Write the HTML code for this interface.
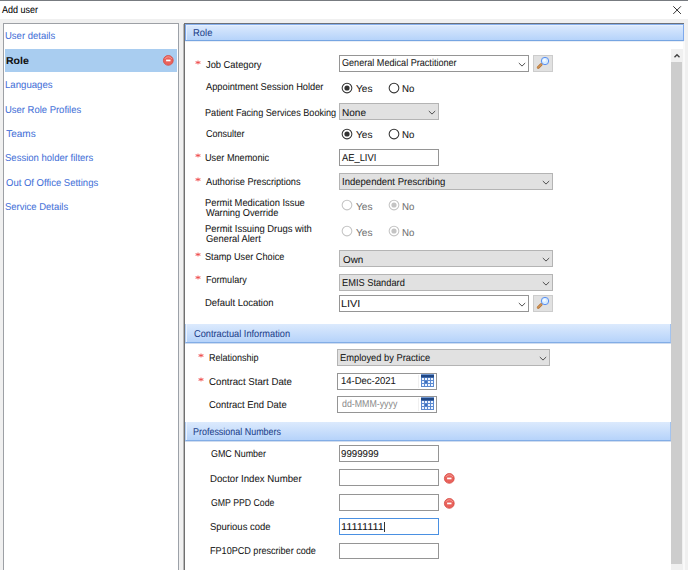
<!DOCTYPE html><html><head><meta charset="utf-8"><style>
*{margin:0;padding:0;box-sizing:border-box}
html,body{width:688px;height:570px;overflow:hidden;background:#f0f0f0;position:relative;font-family:"Liberation Sans",sans-serif}
.a{position:absolute}
.t{position:absolute;font-size:10px;line-height:12px;white-space:nowrap;transform-origin:0 0;color:#1a1a1a;text-rendering:geometricPrecision;-webkit-text-stroke:0.05px currentColor}
.hdr{position:absolute;left:185px;background:linear-gradient(#dceafd,#b6d3fa);border-bottom:1px solid #72a0e2;box-shadow:inset 1px 0 0 #ecf3fd}
.h1{border-left:1px solid #7ea9ec;border-top:1px solid #86afec;border-right:1px solid #7ea9ec;border-bottom-color:#76a5e2;box-shadow:inset 1px 1px 0 #e6f0fd,0 1px 0 #e9eef6}
.h2{border-left:1px solid #b3cff3;border-right:1px solid #a3c3ef;border-bottom-color:#82ade6;box-shadow:inset 1px 0 0 #ecf3fd,0 1px 0 #cfdcef}
.bx{position:absolute;border:1px solid #959595;background:#fff}
.cb{border-color:#b4b4b4;background:#e1e1e1}
.sbtn{position:absolute;width:20px;height:17px;border:1px solid #cccccc;background:#e1e1e1}
.rad{position:absolute;width:11px;height:11px;border-radius:50%;border:1px solid #3a3a3a;background:#fff}
.rad.on::after{content:"";position:absolute;left:2px;top:2px;width:5px;height:5px;border-radius:50%;background:#333}
.rad.dis{border-color:#c2c2c2}
.rad.dis.on::after{background:#c2c2c2}
</style></head><body>
<div class="a" style="left:0;top:0;width:688px;height:1px;background:#777b80"></div>
<div class="a" style="left:0;top:1px;width:688px;height:18px;background:#fff"></div>
<div class="t" style="left:1.70px;top:5px;transform:scaleX(0.9000);color:#000;">Add user</div>
<svg class="a" style="left:672px;top:5px" width="10" height="10" viewBox="0 0 10 10"><path d="M1.3 1.3L8.9 8.9M8.9 1.3L1.3 8.9" stroke="#262626" stroke-width="0.95"/></svg>
<div class="a" style="left:3px;top:23px;width:176px;height:547px;background:#fff;border-left:1px solid #9da0a5;border-top:1px solid #9da0a5;border-right:1px solid #9ca1a8"></div>
<div class="a" style="left:5px;top:49px;width:172px;height:23px;background:#a9cdf0"></div>
<div class="t" style="left:5.25px;top:31px;transform:scaleX(0.9500);color:#4470d8;">User details</div>
<div class="t" style="left:5.24px;top:80px;transform:scaleX(0.9625);color:#4470d8;">Languages</div>
<div class="t" style="left:5.25px;top:105px;transform:scaleX(0.9456);color:#4470d8;">User Role Profiles</div>
<div class="t" style="left:6.20px;top:129px;transform:scaleX(1.0000);color:#4470d8;">Teams</div>
<div class="t" style="left:5.25px;top:153px;transform:scaleX(0.9511);color:#4470d8;">Session holder filters</div>
<div class="t" style="left:6.20px;top:178px;transform:scaleX(0.9495);color:#4470d8;">Out Of Office Settings</div>
<div class="t" style="left:5.25px;top:202px;transform:scaleX(0.9470);color:#4470d8;">Service Details</div>
<div class="t" style="left:5.74px;top:56px;transform:scaleX(1.0550);color:#111;font-weight:bold;">Role</div>
<svg class="a" style="left:162.20px;top:54.40px" width="12" height="12" viewBox="0 0 12 12"><circle cx="6.3" cy="6.4" r="4.9" fill="#e9625b" stroke="#d54a43" stroke-width="0.8"/><path d="M2.8 5A3.8 3.6 0 0 1 9.8 5" fill="none" stroke="#f6a39d" stroke-width="0.8"/><rect x="4.1" y="5.6" width="4.4" height="1.7" fill="#fff"/></svg>
<div class="a" style="left:183px;top:24px;width:1px;height:546px;background:#b8b8b8"></div>
<div class="a" style="left:184px;top:23px;width:500px;height:547px;background:#fff;border-left:1px solid #707070;border-top:1px solid #6c7078"></div>
<div class="a" style="left:683px;top:41px;width:2px;height:529px;background:#f9f9f9"></div>
<div class="a" style="left:671px;top:49px;width:12px;height:521px;background:#f0f0f0"></div>
<svg class="a" style="left:671px;top:49px" width="12" height="13" viewBox="0 0 12 13"><path d="M3.5 8.3L6 5.7L8.5 8.3" fill="none" stroke="#404040" stroke-width="1.35"/></svg>
<div class="a" style="left:671px;top:62px;width:11px;height:502px;background:#cdcdcd"></div>
<div class="hdr h1" style="top:24px;width:499px;height:17px"></div>
<div class="t" style="left:192.86px;top:28px;transform:scaleX(0.9421);color:#21408a;">Role</div>
<div class="hdr h2" style="top:324px;width:486px;height:19px"></div>
<div class="t" style="left:193.70px;top:329px;transform:scaleX(0.9240);color:#21408a;">Contractual Information</div>
<div class="hdr h2" style="top:422px;width:486px;height:19px"></div>
<div class="t" style="left:192.81px;top:427px;transform:scaleX(0.8948);color:#21408a;">Professional Numbers</div>
<div class="t" style="left:206.40px;top:60px;transform:scaleX(0.9322);color:#141414;">Job Category</div>
<svg class="a" style="left:195px;top:60px" width="6" height="6" viewBox="0 0 6 6"><path d="M3 0.6V4.4M0.6 1.7L5.4 3.3M5.4 1.7L0.6 3.3" stroke="#ee4c4c" stroke-width="0.95"/></svg>
<div class="t" style="left:206.40px;top:82px;transform:scaleX(0.9268);color:#141414;">Appointment Session Holder</div>
<div class="t" style="left:205.49px;top:108px;transform:scaleX(0.9112);color:#141414;">Patient Facing Services Booking</div>
<div class="t" style="left:206.40px;top:129px;transform:scaleX(0.9023);color:#141414;">Consulter</div>
<div class="t" style="left:205.48px;top:153px;transform:scaleX(0.9159);color:#141414;">User Mnemonic</div>
<svg class="a" style="left:195px;top:153px" width="6" height="6" viewBox="0 0 6 6"><path d="M3 0.6V4.4M0.6 1.7L5.4 3.3M5.4 1.7L0.6 3.3" stroke="#ee4c4c" stroke-width="0.95"/></svg>
<div class="t" style="left:206.40px;top:177px;transform:scaleX(0.9194);color:#141414;">Authorise Prescriptions</div>
<svg class="a" style="left:195px;top:177px" width="6" height="6" viewBox="0 0 6 6"><path d="M3 0.6V4.4M0.6 1.7L5.4 3.3M5.4 1.7L0.6 3.3" stroke="#ee4c4c" stroke-width="0.95"/></svg>
<div class="t" style="left:205.46px;top:198px;transform:scaleX(0.9352);color:#141414;">Permit Medication Issue</div>
<div class="t" style="left:206.40px;top:208px;transform:scaleX(0.9269);color:#141414;">Warning Override</div>
<div class="t" style="left:205.46px;top:224px;transform:scaleX(0.9420);color:#141414;">Permit Issuing Drugs with</div>
<div class="t" style="left:206.40px;top:234px;transform:scaleX(0.9379);color:#141414;">General Alert</div>
<div class="t" style="left:205.48px;top:252px;transform:scaleX(0.9153);color:#141414;">Stamp User Choice</div>
<svg class="a" style="left:195px;top:252px" width="6" height="6" viewBox="0 0 6 6"><path d="M3 0.6V4.4M0.6 1.7L5.4 3.3M5.4 1.7L0.6 3.3" stroke="#ee4c4c" stroke-width="0.95"/></svg>
<div class="t" style="left:205.50px;top:275px;transform:scaleX(0.9045);color:#141414;">Formulary</div>
<svg class="a" style="left:195px;top:275px" width="6" height="6" viewBox="0 0 6 6"><path d="M3 0.6V4.4M0.6 1.7L5.4 3.3M5.4 1.7L0.6 3.3" stroke="#ee4c4c" stroke-width="0.95"/></svg>
<div class="t" style="left:205.45px;top:298px;transform:scaleX(0.9479);color:#141414;">Default Location</div>
<div class="bx " style="left:339px;top:55px;width:190px;height:17px;"></div>
<svg class="a" style="left:518px;top:61px" width="8" height="7" viewBox="0 0 8 7"><path d="M0.8 2.0L4 5.1L7.2 2.0" fill="none" stroke="#4e4e4e" stroke-width="1"/></svg>
<div class="t" style="left:342.00px;top:58px;transform:scaleX(0.9087);color:#141414;">General Medical Practitioner</div>
<div class="sbtn" style="left:533px;top:55px"></div>
<svg class="a" style="left:533px;top:55px" width="20" height="17" viewBox="0 0 20 17"><path d="M5.2 12.4L8.2 9.4" stroke="#b8783a" stroke-width="2.8" stroke-linecap="round"/><path d="M5.2 12.4L8.2 9.4" stroke="#e2ac70" stroke-width="1" stroke-linecap="round"/><circle cx="12" cy="6" r="3.7" fill="#d6ebff" stroke="#5a8ff0" stroke-width="1"/><circle cx="11.4" cy="5.3" r="1.5" fill="#f6fbff"/></svg>
<svg class="a" style="left:339.60px;top:80.90px" width="14" height="14" viewBox="0 0 14 14"><circle cx="7" cy="7" r="4.85" fill="#fff" stroke="#333333" stroke-width="1.05"/><circle cx="7" cy="7" r="2.6" fill="#333333"/></svg>
<div class="t" style="left:355.89px;top:84px;transform:scaleX(1.0133);color:#141414;">Yes</div>
<svg class="a" style="left:387.00px;top:80.90px" width="14" height="14" viewBox="0 0 14 14"><circle cx="7" cy="7" r="4.85" fill="#fff" stroke="#333333" stroke-width="1.05"/></svg>
<div class="t" style="left:402.43px;top:84px;transform:scaleX(0.9667);color:#141414;">No</div>
<div class="bx cb" style="left:339px;top:103px;width:100px;height:17px;"></div>
<svg class="a" style="left:428px;top:109px" width="8" height="7" viewBox="0 0 8 7"><path d="M0.8 2.0L4 5.1L7.2 2.0" fill="none" stroke="#4e4e4e" stroke-width="1"/></svg>
<div class="t" style="left:341.50px;top:108px;transform:scaleX(1.0045);color:#141414;">None</div>
<svg class="a" style="left:339.60px;top:126.50px" width="14" height="14" viewBox="0 0 14 14"><circle cx="7" cy="7" r="4.85" fill="#fff" stroke="#333333" stroke-width="1.05"/><circle cx="7" cy="7" r="2.6" fill="#333333"/></svg>
<div class="t" style="left:355.89px;top:130px;transform:scaleX(1.0133);color:#141414;">Yes</div>
<svg class="a" style="left:387.00px;top:126.50px" width="14" height="14" viewBox="0 0 14 14"><circle cx="7" cy="7" r="4.85" fill="#fff" stroke="#333333" stroke-width="1.05"/></svg>
<div class="t" style="left:402.43px;top:130px;transform:scaleX(0.9667);color:#141414;">No</div>
<div class="bx " style="left:339px;top:149px;width:100px;height:17px;"></div>
<div class="t" style="left:342.10px;top:153px;transform:scaleX(0.9333);color:#141414;">AE_LIVI</div>
<div class="bx cb" style="left:339px;top:173px;width:214px;height:17px;"></div>
<svg class="a" style="left:542px;top:179px" width="8" height="7" viewBox="0 0 8 7"><path d="M0.8 2.0L4 5.1L7.2 2.0" fill="none" stroke="#4e4e4e" stroke-width="1"/></svg>
<div class="t" style="left:341.65px;top:177px;transform:scaleX(0.9533);color:#141414;">Independent Prescribing</div>
<svg class="a" style="left:339.60px;top:198.00px" width="14" height="14" viewBox="0 0 14 14"><circle cx="7" cy="7" r="4.85" fill="#fff" stroke="#c4c4c4" stroke-width="1.05"/></svg>
<div class="t" style="left:355.89px;top:202px;transform:scaleX(1.0133);color:#707070;">Yes</div>
<svg class="a" style="left:387.00px;top:198.00px" width="14" height="14" viewBox="0 0 14 14"><circle cx="7" cy="7" r="4.85" fill="#fff" stroke="#c4c4c4" stroke-width="1.05"/><circle cx="7" cy="7" r="2.6" fill="#c4c4c4"/></svg>
<div class="t" style="left:402.43px;top:202px;transform:scaleX(0.9667);color:#707070;">No</div>
<svg class="a" style="left:339.60px;top:223.90px" width="14" height="14" viewBox="0 0 14 14"><circle cx="7" cy="7" r="4.85" fill="#fff" stroke="#c4c4c4" stroke-width="1.05"/></svg>
<div class="t" style="left:355.89px;top:228px;transform:scaleX(1.0133);color:#707070;">Yes</div>
<svg class="a" style="left:387.00px;top:223.90px" width="14" height="14" viewBox="0 0 14 14"><circle cx="7" cy="7" r="4.85" fill="#fff" stroke="#c4c4c4" stroke-width="1.05"/><circle cx="7" cy="7" r="2.6" fill="#c4c4c4"/></svg>
<div class="t" style="left:402.43px;top:228px;transform:scaleX(0.9667);color:#707070;">No</div>
<div class="bx cb" style="left:339px;top:250px;width:214px;height:17px;"></div>
<svg class="a" style="left:542px;top:256px" width="8" height="7" viewBox="0 0 8 7"><path d="M0.8 2.0L4 5.1L7.2 2.0" fill="none" stroke="#4e4e4e" stroke-width="1"/></svg>
<div class="t" style="left:342.60px;top:255px;transform:scaleX(0.9850);color:#141414;">Own</div>
<div class="bx cb" style="left:339px;top:274px;width:214px;height:17px;"></div>
<svg class="a" style="left:542px;top:280px" width="8" height="7" viewBox="0 0 8 7"><path d="M0.8 2.0L4 5.1L7.2 2.0" fill="none" stroke="#4e4e4e" stroke-width="1"/></svg>
<div class="t" style="left:341.67px;top:278px;transform:scaleX(0.9258);color:#141414;">EMIS Standard</div>
<div class="bx " style="left:339px;top:295px;width:190px;height:17px;"></div>
<svg class="a" style="left:518px;top:301px" width="8" height="7" viewBox="0 0 8 7"><path d="M0.8 2.0L4 5.1L7.2 2.0" fill="none" stroke="#4e4e4e" stroke-width="1"/></svg>
<div class="t" style="left:340.71px;top:299px;transform:scaleX(1.0875);color:#141414;">LIVI</div>
<div class="sbtn" style="left:533px;top:295px"></div>
<svg class="a" style="left:533px;top:295px" width="20" height="17" viewBox="0 0 20 17"><path d="M5.2 12.4L8.2 9.4" stroke="#b8783a" stroke-width="2.8" stroke-linecap="round"/><path d="M5.2 12.4L8.2 9.4" stroke="#e2ac70" stroke-width="1" stroke-linecap="round"/><circle cx="12" cy="6" r="3.7" fill="#d6ebff" stroke="#5a8ff0" stroke-width="1"/><circle cx="11.4" cy="5.3" r="1.5" fill="#f6fbff"/></svg>
<div class="t" style="left:208.50px;top:353px;transform:scaleX(0.9019);color:#141414;">Relationship</div>
<svg class="a" style="left:198px;top:353px" width="6" height="6" viewBox="0 0 6 6"><path d="M3 0.6V4.4M0.6 1.7L5.4 3.3M5.4 1.7L0.6 3.3" stroke="#ee4c4c" stroke-width="0.95"/></svg>
<div class="t" style="left:209.40px;top:377px;transform:scaleX(0.9682);color:#141414;">Contract Start Date</div>
<svg class="a" style="left:198px;top:377px" width="6" height="6" viewBox="0 0 6 6"><path d="M3 0.6V4.4M0.6 1.7L5.4 3.3M5.4 1.7L0.6 3.3" stroke="#ee4c4c" stroke-width="0.95"/></svg>
<div class="t" style="left:209.40px;top:400px;transform:scaleX(0.9439);color:#141414;">Contract End Date</div>
<div class="bx cb" style="left:337px;top:349px;width:213px;height:17px;"></div>
<svg class="a" style="left:539px;top:355px" width="8" height="7" viewBox="0 0 8 7"><path d="M0.8 2.0L4 5.1L7.2 2.0" fill="none" stroke="#4e4e4e" stroke-width="1"/></svg>
<div class="t" style="left:339.77px;top:353px;transform:scaleX(0.9316);color:#141414;">Employed by Practice</div>
<div class="bx " style="left:337px;top:373px;width:100px;height:17px;"></div>
<div class="t" style="left:340.95px;top:376px;transform:scaleX(0.9464);color:#141414;">14-Dec-2021</div>
<div class="a" style="left:418px;top:375px;width:1px;height:13px;background:#f0f0f0"></div>
<svg class="a" style="left:421px;top:374px" width="13" height="13" viewBox="0 0 13 13"><rect x="0" y="0" width="13" height="13" fill="#5c8ad0"/><rect x="0" y="0.5" width="13" height="3" fill="#1f4785"/><rect x="0" y="0" width="13" height="0.8" fill="#7ea3dc"/><rect x="1" y="4" width="2" height="2" fill="#eef5ff"/><rect x="4" y="4" width="2" height="2" fill="#eef5ff"/><rect x="7" y="4" width="2" height="2" fill="#eef5ff"/><rect x="10" y="4" width="2" height="2" fill="#eef5ff"/><rect x="1" y="7" width="2" height="2" fill="#eef5ff"/><rect x="4" y="7" width="2" height="2" fill="#3f6fb8"/><rect x="7" y="7" width="2" height="2" fill="#eef5ff"/><rect x="10" y="7" width="2" height="2" fill="#eef5ff"/><rect x="1" y="10" width="2" height="2" fill="#eef5ff"/><rect x="4" y="10" width="2" height="2" fill="#eef5ff"/><rect x="7" y="10" width="2" height="2" fill="#eef5ff"/><rect x="10" y="10" width="2" height="2" fill="#eef5ff"/></svg>
<div class="bx " style="left:337px;top:396px;width:100px;height:17px;"></div>
<div class="t" style="left:341.50px;top:399px;transform:scaleX(0.8810);color:#8c8c8c;">dd-MMM-yyyy</div>
<div class="a" style="left:418px;top:398px;width:1px;height:13px;background:#f0f0f0"></div>
<svg class="a" style="left:421px;top:397px" width="13" height="13" viewBox="0 0 13 13"><rect x="0" y="0" width="13" height="13" fill="#5c8ad0"/><rect x="0" y="0.5" width="13" height="3" fill="#1f4785"/><rect x="0" y="0" width="13" height="0.8" fill="#7ea3dc"/><rect x="1" y="4" width="2" height="2" fill="#eef5ff"/><rect x="4" y="4" width="2" height="2" fill="#eef5ff"/><rect x="7" y="4" width="2" height="2" fill="#eef5ff"/><rect x="10" y="4" width="2" height="2" fill="#eef5ff"/><rect x="1" y="7" width="2" height="2" fill="#eef5ff"/><rect x="4" y="7" width="2" height="2" fill="#3f6fb8"/><rect x="7" y="7" width="2" height="2" fill="#eef5ff"/><rect x="10" y="7" width="2" height="2" fill="#eef5ff"/><rect x="1" y="10" width="2" height="2" fill="#eef5ff"/><rect x="4" y="10" width="2" height="2" fill="#eef5ff"/><rect x="7" y="10" width="2" height="2" fill="#eef5ff"/><rect x="10" y="10" width="2" height="2" fill="#eef5ff"/></svg>
<div class="t" style="left:210.80px;top:449px;transform:scaleX(0.8918);color:#141414;">GMC Number</div>
<div class="t" style="left:209.84px;top:474px;transform:scaleX(0.9638);color:#141414;">Doctor Index Number</div>
<div class="t" style="left:210.80px;top:498px;transform:scaleX(0.8722);color:#141414;">GMP PPD Code</div>
<div class="t" style="left:209.85px;top:522px;transform:scaleX(0.9468);color:#141414;">Spurious code</div>
<div class="t" style="left:209.89px;top:546px;transform:scaleX(0.9070);color:#141414;">FP10PCD prescriber code</div>
<div class="bx " style="left:339px;top:445px;width:100px;height:17px;"></div>
<div class="t" style="left:341.00px;top:449px;transform:scaleX(0.9667);color:#141414;">9999999</div>
<div class="bx " style="left:339px;top:469px;width:100px;height:17px;"></div>
<svg class="a" style="left:443.00px;top:472.00px" width="12" height="12" viewBox="0 0 12 12"><circle cx="6.3" cy="6.4" r="4.9" fill="#e9625b" stroke="#d54a43" stroke-width="0.8"/><path d="M2.8 5A3.8 3.6 0 0 1 9.8 5" fill="none" stroke="#f6a39d" stroke-width="0.8"/><rect x="4.1" y="5.6" width="4.4" height="1.7" fill="#fff"/></svg>
<div class="bx " style="left:339px;top:494px;width:100px;height:17px;"></div>
<svg class="a" style="left:443.00px;top:497.00px" width="12" height="12" viewBox="0 0 12 12"><circle cx="6.3" cy="6.4" r="4.9" fill="#e9625b" stroke="#d54a43" stroke-width="0.8"/><path d="M2.8 5A3.8 3.6 0 0 1 9.8 5" fill="none" stroke="#f6a39d" stroke-width="0.8"/><rect x="4.1" y="5.6" width="4.4" height="1.7" fill="#fff"/></svg>
<div class="bx " style="left:339px;top:518px;width:100px;height:17px;border-color:#4a90e2;"></div>
<div class="t" style="left:340.71px;top:522px;transform:scaleX(1.0868);color:#141414;">11111111</div>
<div class="a" style="left:384px;top:522px;width:1px;height:10px;background:#333"></div>
<div class="bx " style="left:339px;top:543px;width:100px;height:16px;"></div>
</body></html>
